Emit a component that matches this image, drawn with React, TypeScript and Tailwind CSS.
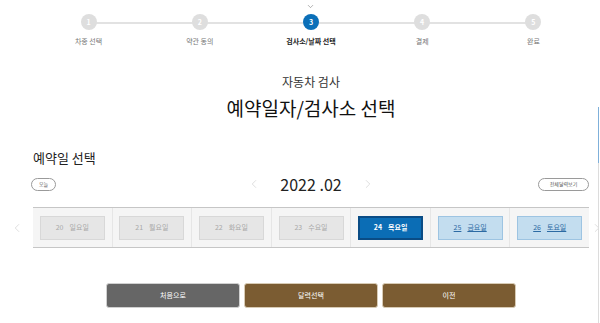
import { ChevronDown, ChevronLeft, ChevronRight } from "lucide-react";

const steps = [
  { n: 1, label: "차종 선택" },
  { n: 2, label: "약관 동의" },
  { n: 3, label: "검사소/날짜 선택", active: true },
  { n: 4, label: "결제" },
  { n: 5, label: "완료" },
];

const days = [
  { d: 20, w: "일요일", state: "off" },
  { d: 21, w: "월요일", state: "off" },
  { d: 22, w: "화요일", state: "off" },
  { d: 23, w: "수요일", state: "off" },
  { d: 24, w: "목요일", state: "on" },
  { d: 25, w: "금요일", state: "open" },
  { d: 26, w: "토요일", state: "open" },
];

function Stepper() {
  return (
    <div className="relative">
      {/* connecting line */}
      <div className="absolute left-[55px] right-[55px] top-[21px] h-[2px] bg-[#e2e2e2]" />
      <div className="relative grid grid-cols-5">
        {steps.map((s) => (
          <div key={s.n} className="flex flex-col items-center">
            <div className="flex h-[13px] items-start justify-center">
              {s.active && <ChevronDown size={9} strokeWidth={1.5} className="mt-[1px] text-[#777]" />}
            </div>
            <div
              className={
                s.active
                  ? "flex h-[16px] w-[16px] items-center justify-center rounded-full bg-[#0b6fb8] text-[7px] font-bold text-white"
                  : "flex h-[16px] w-[16px] items-center justify-center rounded-full bg-[#dedede] text-[7px] font-bold text-white"
              }
            >
              {s.n}
            </div>
            <div
              className={
                s.active
                  ? "mt-[7px] text-[7px] leading-[9px] font-bold text-[#222]"
                  : "mt-[7px] text-[7px] leading-[9px] text-[#777]"
              }
            >
              {s.label}
            </div>
          </div>
        ))}
      </div>
    </div>
  );
}

function DayCell({ d, w, state }: { d: number; w: string; state: string }) {
  const base = "flex h-[24px] w-[65px] items-center justify-center gap-[6px] text-[7px]";
  const look =
    state === "on"
      ? "border-2 border-[#0a4c85] bg-[#0b6db5] text-white font-bold"
      : state === "open"
      ? "border border-[#9dc4e2] bg-[#c3ddef] text-[#2c6aa3] underline"
      : "border border-[#d8d8d8] bg-[#e6e6e6] text-[#a8a8a8]";
  return (
    <div className="flex flex-1 items-center justify-center border-r border-[#e6e6e6] last:border-r-0">
      <div className={`${base} ${look}`}>
        <span>{d}</span>
        <span>{w}</span>
      </div>
    </div>
  );
}

export default function App() {
  return (
    <div
      className="relative h-[323px] w-[600px] overflow-hidden bg-white"
      style={{ fontFamily: '"Noto Sans CJK KR", "Noto Sans", sans-serif' }}
    >
      {/* right scrollbar */}
      <div className="absolute right-[1px] top-[107px] bottom-0 w-[1px] bg-[#dcdcdc]" />
      <div className="absolute right-[1px] top-[107px] h-[56px] w-[1px] bg-[#7fb0da]" />

      <div className="pl-[33px] pr-[11px] pt-[1px]">
        <Stepper />

        {/* heading */}
        <div className="mt-[28px] flex flex-col items-center">
          <div className="text-[12px] leading-[16px] text-[#333]">자동차 검사</div>
          <div className="mt-[4px] text-[19px] leading-[27px] text-[#111]">예약일자/검사소 선택</div>
        </div>

        <div className="mt-[28px] text-[13px] leading-[18px] text-[#222]">예약일 선택</div>

        {/* month row */}
        <div className="mt-[7px] grid h-[20px] grid-cols-[1fr_auto_1fr] items-center">
          <div className="flex">
            <button className="ml-[-2px] flex h-[13px] w-[25px] items-center justify-center rounded-full border border-[#9a9a9a] text-[5px] text-[#555]">
              오늘
            </button>
          </div>
          <div className="flex items-center gap-[19px] text-[#222]">
            <ChevronLeft size={14} strokeWidth={1} className="text-[#c8c8c8]" />
            <span className="text-[16px] leading-[20px]">2022 .02</span>
            <ChevronRight size={14} strokeWidth={1} className="text-[#c8c8c8]" />
          </div>
          <div className="flex justify-end">
            <button className="flex h-[13px] w-[51px] items-center justify-center rounded-full border border-[#9a9a9a] text-[5px] text-[#555]">
              전체달력보기
            </button>
          </div>
        </div>
      </div>

      {/* day strip */}
      <div className="mt-[13px] flex items-center">
        <div className="flex w-[33px] justify-center">
          <ChevronLeft size={14} strokeWidth={1} className="text-[#c8c8c8]" />
        </div>
        <div className="flex h-[41px] w-[556px] border-y border-[#c6c6c6] bg-[#f5f5f5]">
          {days.map((x) => (
            <DayCell key={x.d} {...x} />
          ))}
        </div>
        <div className="flex w-[11px] justify-end">
          <ChevronRight size={14} strokeWidth={1} className="-mr-[4px] text-[#c8c8c8]" />
        </div>
      </div>

      {/* bottom buttons */}
      <div className="mt-[35px] flex justify-center gap-[4px] pl-[22px]">
        <button className="h-[25px] w-[134px] rounded-[3px] border border-[#d0d0d0] bg-[#666666] text-[7px] text-white">
          처음으로
        </button>
        <button className="h-[25px] w-[134px] rounded-[3px] border border-[#d8cbb5] bg-[#7b5c32] text-[7px] text-white">
          달력선택
        </button>
        <button className="h-[25px] w-[134px] rounded-[3px] border border-[#d8cbb5] bg-[#7b5c32] text-[7px] text-white">
          이전
        </button>
      </div>
    </div>
  );
}
